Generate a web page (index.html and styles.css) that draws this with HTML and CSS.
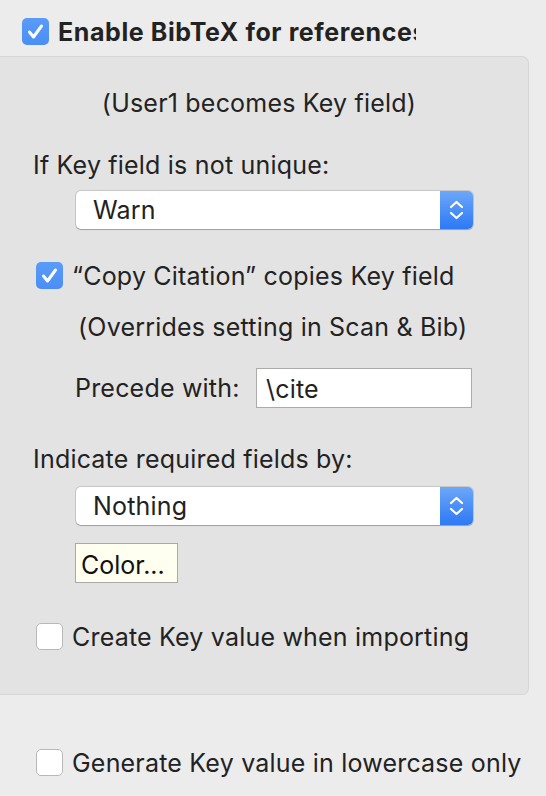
FILE: index.html
```html
<!DOCTYPE html>
<html lang="en">
<head>
    <meta charset="UTF-8">
    <title>BibTeX Preferences</title>
    <link rel="stylesheet" href="styles.css">
</head>
<body>
    <div class="title-row">
        <span class="check on">
            <svg viewBox="0 0 27 27" width="27" height="27"><path d="M7.5 14 L11.5 19 L19.5 8" fill="none" stroke="#fff" stroke-width="3" stroke-linecap="round" stroke-linejoin="round"/></svg>
        </span>
        <span class="title">Enable BibTeX for references</span>
    </div>

    <div class="panel">
        <div class="note">(User1 becomes Key field)</div>

        <div class="label first">If Key field is not unique:</div>
        <div class="popup">
            <span class="popup-value">Warn</span>
            <span class="popup-arrows">
                <svg viewBox="0 0 33 38" width="33" height="38"><path d="M11 16 L16.5 11 L22 16 M11 22 L16.5 27 L22 22" fill="none" stroke="#fff" stroke-width="2.2" stroke-linecap="round" stroke-linejoin="round"/></svg>
            </span>
        </div>

        <div class="check-row copy">
            <span class="check on">
                <svg viewBox="0 0 27 27" width="27" height="27"><path d="M7.5 14 L11.5 19 L19.5 8" fill="none" stroke="#fff" stroke-width="3" stroke-linecap="round" stroke-linejoin="round"/></svg>
            </span>
            <span>“Copy Citation” copies Key field</span>
        </div>
        <div class="override">(Overrides setting in Scan &amp; Bib)</div>

        <div class="precede">
            <span class="precede-label">Precede with:</span>
            <span class="field">\cite</span>
        </div>

        <div class="label second">Indicate required fields by:</div>
        <div class="popup popup-2">
            <span class="popup-value">Nothing</span>
            <span class="popup-arrows">
                <svg viewBox="0 0 33 38" width="33" height="38"><path d="M11 16 L16.5 11 L22 16 M11 22 L16.5 27 L22 22" fill="none" stroke="#fff" stroke-width="2.2" stroke-linecap="round" stroke-linejoin="round"/></svg>
            </span>
        </div>
        <div class="color-btn">Color...</div>

        <div class="check-row create">
            <span class="check"></span>
            <span>Create Key value when importing</span>
        </div>
    </div>

    <div class="check-row lower">
        <span class="check"></span>
        <span>Generate Key value in lowercase only</span>
    </div>
</body>
</html>
```

FILE: styles.css
```css
body {
    margin: 0;
    background: #ececec;
    font-family: Inter, "Liberation Sans", sans-serif;
    font-size: 25px;
    letter-spacing: 0.2px;
    color: #222;
    width: 546px;
    height: 796px;
    overflow: hidden;
}
.title-row {
    display: flex;
    align-items: center;
    height: 27px;
    margin-top: 18px;
    padding-left: 22px;
}
.title {
    font-weight: bold;
    letter-spacing: 0.6px;
    margin-left: 9px;
    width: 358px;
    white-space: nowrap;
    overflow: hidden;
    line-height: 30px;
}
.check {
    width: 27px;
    height: 27px;
    box-sizing: border-box;
    border-radius: 5px;
    background: #fff;
    border: 1px solid #b8b8b8;
    flex: none;
    display: block;
}
.check.on {
    border: none;
    background: linear-gradient(#5a9cf8, #4a8ef5);
}
.check svg {
    display: block;
}
.panel {
    margin-top: 11px;
    width: 529px;
    box-sizing: border-box;
    height: 639px;
    background: #e3e3e3;
    border: 1px solid #d6d6d6;
    border-left: none;
    border-radius: 0 7px 7px 0;
    padding-top: 31px;
}
.note {
    text-align: center;
    line-height: 30px;
    padding-right: 10px;
}
.label {
    line-height: 30px;
    padding-left: 33px;
    margin-top: 32px;
}
.label.second {
    margin-top: 36px;
}
.popup {
    margin: 11px 0 0 76px;
    width: 397px;
    height: 38px;
    box-sizing: border-box;
    display: flex;
    background: #fff;
    border-radius: 5px;
    box-shadow: 0 0 0 1px rgba(0, 0, 0, 0.12), 0 1px 1px rgba(0, 0, 0, 0.2);
    overflow: hidden;
}
.popup-2 {
    margin-top: 13px;
}
.popup-value {
    flex: 1;
    padding-left: 17px;
    line-height: 38px;
}
.popup-arrows {
    width: 33px;
    background: linear-gradient(#6ca8f9, #2d79f5);
}
.popup-arrows svg {
    display: block;
}
.check-row {
    display: flex;
    align-items: center;
    height: 27px;
    padding-left: 36px;
    gap: 9px;
}
.check-row.copy {
    margin-top: 33px;
}
.override {
    line-height: 30px;
    margin-top: 23px;
    padding-left: 78px;
}
.precede {
    display: flex;
    align-items: center;
    margin-top: 26px;
    padding-left: 75px;
    height: 40px;
}
.precede-label {
    width: 181px;
}
.field {
    width: 216px;
    height: 40px;
    box-sizing: border-box;
    background: #fff;
    border: 1px solid #ababab;
    padding-left: 9px;
    line-height: 40px;
}
.color-btn {
    margin: 18px 0 0 75px;
    width: 103px;
    height: 40px;
    box-sizing: border-box;
    background: #fffff0;
    border: 1px solid #aaa;
    padding-left: 5px;
    line-height: 42px;
    letter-spacing: 0;
    color: #111;
}
.check-row.create {
    margin-top: 40px;
}
.check-row.lower {
    margin-top: 54px;
}
```
